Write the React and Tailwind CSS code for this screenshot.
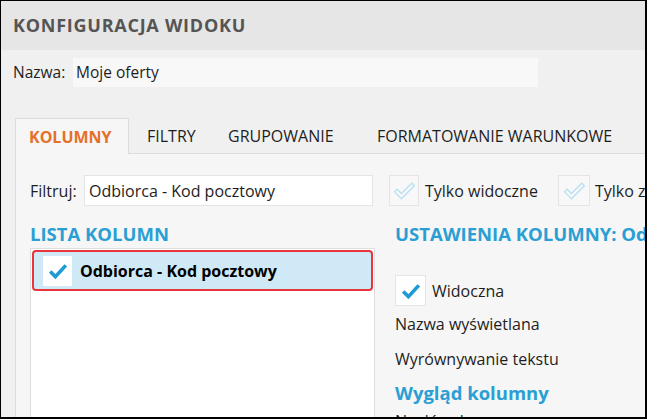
import React from "react";

const font = { fontFamily: '"Open Sans", "Noto Sans", sans-serif' };

function BlueCheck({ className = "" }) {
  return (
    <svg viewBox="0 0 30 30" className={className}>
      <path d="M6 15.5 L12 21.5 L24 8.5" fill="none" stroke="#1e9ad6" strokeWidth="4.2" strokeLinecap="butt" strokeLinejoin="miter" />
    </svg>
  );
}

function LightCheck({ className = "" }) {
  return (
    <svg viewBox="0 0 30 30" className={className}>
      <path d="M4 16 L7 13 L12 18 L24 6 L27 9 L12 24 Z" fill="none" stroke="#b9e0f2" strokeWidth="1.6" strokeLinejoin="miter" />
    </svg>
  );
}

export default function App() {
  return (
    <div
      className="w-[647px] h-[419px] overflow-hidden border-l border-t border-r-2 border-b-2 border-black bg-[#f0f0f0] flex flex-col text-[#1e1e1e]"
      style={font}
    >
      <div className="h-[49px] shrink-0 bg-[#e6e6e6] flex items-center pl-[12px]">
        <span className="text-[18px] font-bold text-[#555555] tracking-[0.75px]">KONFIGURACJA WIDOKU</span>
      </div>
      <div className="flex items-center pl-[12px] mt-[8px] h-[29px] shrink-0 text-[15.5px]">
        <span className="w-[60px] shrink-0">Nazwa:</span>
        <div className="w-[465px] h-[29px] bg-[#f8f8f8] flex items-center pl-[3px]">Moje oferty</div>
      </div>
      <div className="flex flex-col flex-1 pl-[14px] mt-[31px] min-h-0">
        <div className="flex items-end h-[36px] shrink-0 text-[16px]">
          <div className="w-[114px] h-[36px] border border-b-0 border-[#dcdcdc] bg-[#f6f6f6] flex items-center pl-[13px] font-bold text-[#e5702a] text-[16px]">
            KOLUMNY
          </div>
          <div className="flex-1 h-[36px] border-b border-[#dcdcdc] flex items-center whitespace-nowrap">
            <span className="w-[81px] pl-[18px] shrink-0">FILTRY</span>
            <span className="w-[149px] pl-[18px] shrink-0">GRUPOWANIE</span>
            <span className="pl-[18px] shrink-0">FORMATOWANIE WARUNKOWE</span>
          </div>
        </div>
        <div className="flex-1 border-l border-[#dcdcdc] bg-[#f6f6f6] flex flex-col pl-[14px] min-h-0">
          <div className="flex items-center mt-[21px] h-[31px] shrink-0 text-[16px] whitespace-nowrap">
            <span className="w-[54px] shrink-0">Filtruj:</span>
            <div className="w-[289px] h-[31px] shrink-0 bg-white border border-[#e4e4e4] flex items-center pl-[4px]">
              Odbiorca - Kod pocztowy
            </div>
            <div className="ml-[16px] w-[30px] h-[31px] shrink-0 bg-[#f8f8f8] border border-[#e4e4e4] flex items-center justify-center">
              <LightCheck className="w-[26px] h-[26px]" />
            </div>
            <span className="ml-[6px] w-[111px] shrink-0">Tylko widoczne</span>
            <div className="ml-[22px] w-[32px] h-[31px] bg-[#f8f8f8] border border-[#e4e4e4] flex items-center justify-center shrink-0">
              <LightCheck className="w-[26px] h-[26px]" />
            </div>
            <span className="ml-[5px] shrink-0">Tylko zaznaczone</span>
          </div>
          <div className="flex flex-1 mt-[13px] min-h-0">
            <div className="w-[345px] flex flex-col shrink-0">
              <div className="h-[29px] text-[18.5px] font-bold text-[#2a9fd4] leading-[29px]">LISTA KOLUMN</div>
              <div className="flex-1 bg-white border border-[#dedede] border-b-0 p-[1px]">
                <div className="h-[41px] rounded-[4px] border-2 border-[#e8363c] bg-[#cfe9f6] flex items-center pl-[9px]">
                  <div className="w-[29px] h-[30px] bg-white flex items-center justify-center">
                    <BlueCheck className="w-[26px] h-[26px]" />
                  </div>
                  <span className="ml-[8px] text-[16px] font-bold text-black">Odbiorca - Kod pocztowy</span>
                </div>
              </div>
            </div>
            <div className="flex flex-col pl-[20px] whitespace-nowrap">
              <div className="h-[29px] text-[18.5px] font-bold text-[#2a9fd4] leading-[29px]">USTAWIENIA KOLUMNY: Odbiorca</div>
              <div className="flex items-center mt-[27px] h-[31px] shrink-0">
                <div className="w-[31px] h-[31px] bg-white border border-[#e4e4e4] flex items-center justify-center">
                  <BlueCheck className="w-[26px] h-[26px]" />
                </div>
                <span className="ml-[6px] text-[16px]">Widoczna</span>
              </div>
              <div className="mt-[3px] h-[30px] leading-[30px] text-[16px] shrink-0">Nazwa wyświetlana</div>
              <div className="mt-[5px] h-[30px] leading-[30px] text-[16px] shrink-0">Wyrównywanie tekstu</div>
              <div className="mt-[3px] h-[32px] leading-[32px] text-[18.5px] font-bold text-[#2a9fd4] shrink-0">Wygląd kolumny</div>
              <div className="h-[24px] leading-[24px] text-[16px] shrink-0">Nagłówek</div>
            </div>
          </div>
        </div>
      </div>
    </div>
  );
}
